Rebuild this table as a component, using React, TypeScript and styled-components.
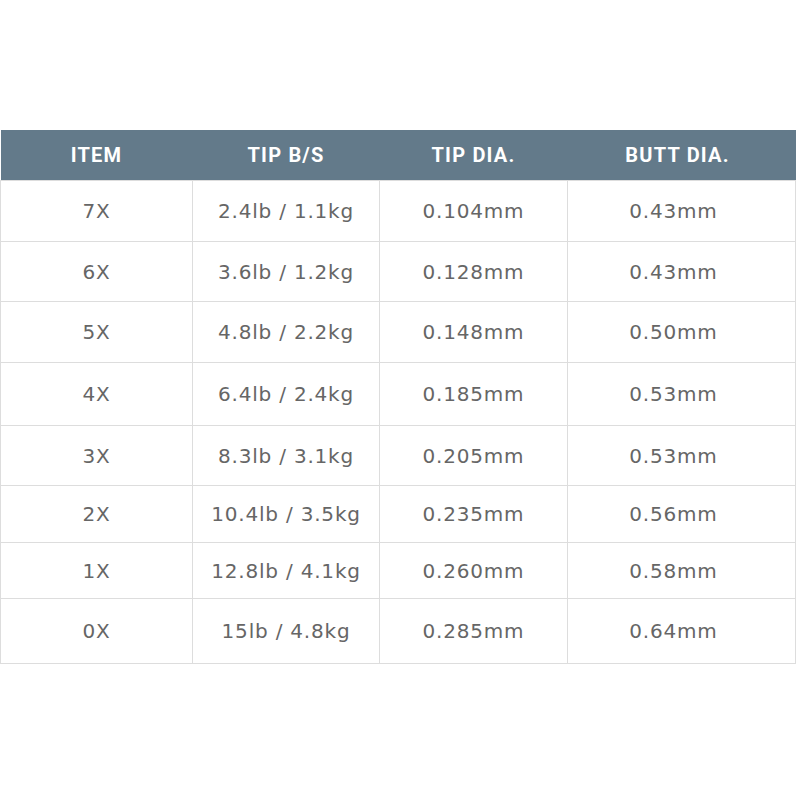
import React from "react";
import styled, { createGlobalStyle } from "styled-components";

const Global = createGlobalStyle`
  html, body { margin: 0; padding: 0; background: #ffffff; }
`;

const Page = styled.div`
  padding-top: 130px;
  width: 800px;
  height: 800px;
  box-sizing: border-box;
`;

const Table = styled.table`
  width: 795px;
  border-collapse: collapse;
  table-layout: fixed;
`;

const HeadCell = styled.th<{ $shift?: number }>`
  height: 50px;
  padding: 0 ${(p) => (p.$shift ? p.$shift : 0)}px 0 0;
  background: #637a8a;
  color: #ffffff;
  font-family: "Roboto", "DejaVu Sans", sans-serif;
  font-weight: 700;
  font-size: 20px;
  letter-spacing: 1.2px;
  text-align: center;
  vertical-align: middle;
`;

const Row = styled.tr<{ $h: number }>`
  height: ${(p) => p.$h}px;
`;

const Cell = styled.td<{ $shift?: number }>`
  padding: 0 ${(p) => (p.$shift ? p.$shift : 0)}px 0 0;
  border: 1px solid #dddddd;
  color: #666666;
  font-family: "DejaVu Sans", "Verdana", sans-serif;
  font-size: 20px;
  letter-spacing: 0.8px;
  text-align: center;
  vertical-align: middle;
`;

const cols = [192, 187, 188, 228];
const heads = ["ITEM", "TIP B/S", "TIP DIA.", "BUTT DIA."];
const rows: [string, string, string, string, number][] = [
  ["7X", "2.4lb / 1.1kg", "0.104mm", "0.43mm", 61],
  ["6X", "3.6lb / 1.2kg", "0.128mm", "0.43mm", 60],
  ["5X", "4.8lb / 2.2kg", "0.148mm", "0.50mm", 61],
  ["4X", "6.4lb / 2.4kg", "0.185mm", "0.53mm", 63],
  ["3X", "8.3lb / 3.1kg", "0.205mm", "0.53mm", 60],
  ["2X", "10.4lb / 3.5kg", "0.235mm", "0.56mm", 57],
  ["1X", "12.8lb / 4.1kg", "0.260mm", "0.58mm", 56],
  ["0X", "15lb / 4.8kg", "0.285mm", "0.64mm", 65],
];

export default function App() {
  return (
    <>
      <Global />
      <Page>
        <Table>
          <colgroup>
            {cols.map((w, i) => (
              <col key={i} style={{ width: w }} />
            ))}
          </colgroup>
          <thead>
            <tr>
              {heads.map((h, i) => (
                <HeadCell key={h} $shift={i === 3 ? 8 : 0}>
                  {h}
                </HeadCell>
              ))}
            </tr>
          </thead>
          <tbody>
            {rows.map((r) => (
              <Row key={r[0]} $h={r[4]}>
                <Cell>{r[0]}</Cell>
                <Cell>{r[1]}</Cell>
                <Cell>{r[2]}</Cell>
                <Cell $shift={16}>{r[3]}</Cell>
              </Row>
            ))}
          </tbody>
        </Table>
      </Page>
    </>
  );
}
